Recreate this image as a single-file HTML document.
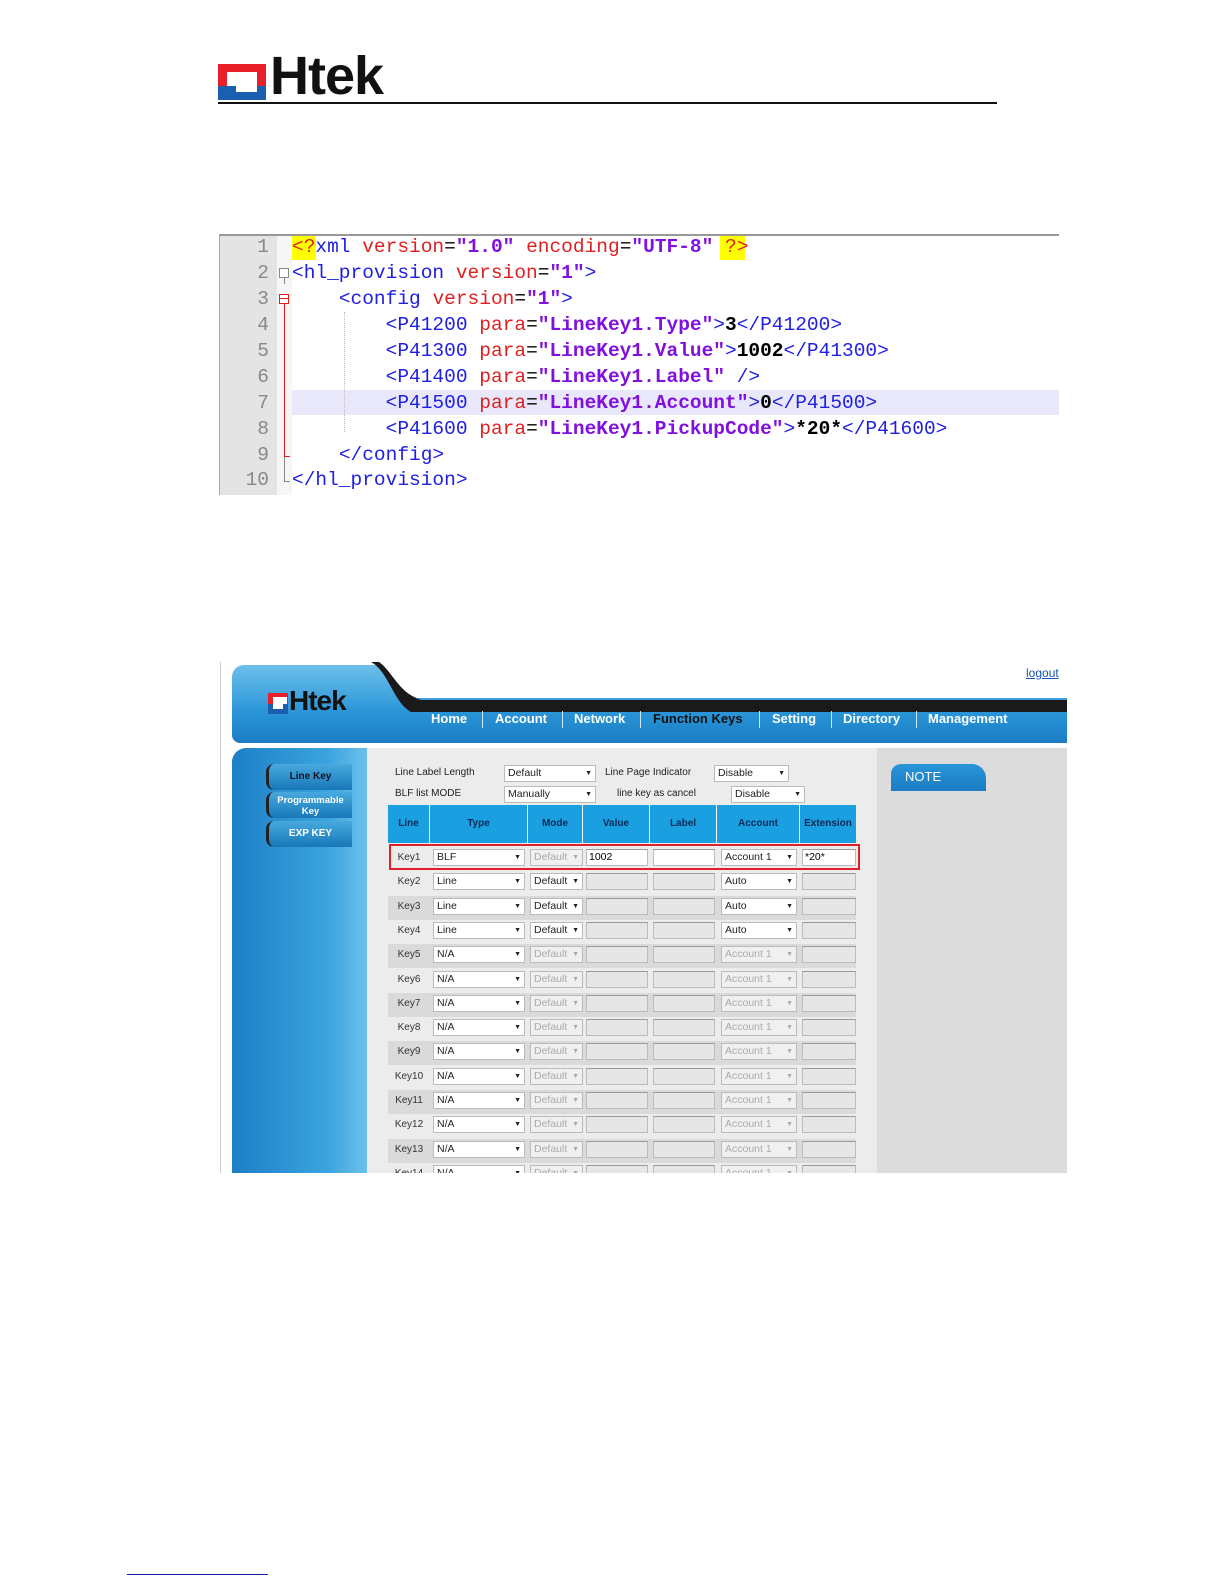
<!DOCTYPE html>
<html><head><meta charset="utf-8"><style>
*{margin:0;padding:0;box-sizing:border-box}
html{width:1224px;height:1584px;overflow:hidden}
body{width:1224px;height:1584px;background:#fff;position:relative;overflow:hidden;font-family:"Liberation Sans",sans-serif}
.a{position:absolute}
.code{font-family:"Liberation Mono",monospace;font-size:19.5px;white-space:pre;line-height:26px}
.t{color:#2020e0}.r{color:#e02020}.v{color:#8010e0;font-weight:bold}.k{color:#000;font-weight:bold}
.ln{position:absolute;left:219px;width:50px;text-align:right;color:#888;font-family:"Liberation Mono",monospace;font-size:19.5px;line-height:26px}
.nav{position:absolute;top:711px;color:#fff;font-weight:bold;font-size:13px}
.sep{position:absolute;top:711px;width:1px;height:17px;background:#cfe6f5}
.th{position:absolute;top:805px;height:38px;line-height:38px;text-align:center;font-size:10px;font-weight:bold;color:#0a2a55;background:#1a9fe0;border-right:1px solid #fff}
.row{position:absolute;left:388px;width:468px;height:24px;font-size:10px}
.sel{position:absolute;height:17px;border:1px solid #bbb;background:#fff;font-size:10.5px;line-height:15px;padding-left:3px;color:#222;overflow:hidden}
.sel:after{content:"▼";position:absolute;right:3px;top:0;font-size:7px}
.dis{color:#aaa;background:#f0f0f0}
.inp{position:absolute;height:17px;border:1px solid #bbb;border-top-color:#999;background:#e6e6e6}
.sb{position:absolute;left:266px;width:86px;height:26px;background:linear-gradient(#48a9df,#1878b8);border-left:3px solid #222;border-radius:8px 0 0 8px;color:#fff;font-size:10px;font-weight:bold;text-align:center}
</style></head><body>

<!-- header logo -->
<div class="a" style="left:218px;top:64px;width:48px;height:36px;background:#e8202a"></div>
<div class="a" style="left:227px;top:72px;width:30px;height:14px;background:#fff"></div>
<div class="a" style="left:227px;top:86px;width:30px;height:14px;background:#1a5fb0"></div>
<div class="a" style="left:236px;top:86px;width:21px;height:6px;background:#fff"></div>
<div class="a" style="left:218px;top:86px;width:9px;height:14px;background:#1a5fb0"></div>
<div class="a" style="left:257px;top:86px;width:9px;height:14px;background:#1a5fb0"></div>
<div class="a" style="left:270px;top:48px;font-size:54px;font-weight:bold;color:#111;letter-spacing:-1px;line-height:56px">Htek</div>
<div class="a" style="left:218px;top:102px;width:779px;height:2px;background:#111"></div>

<!-- code box -->
<div class="a" style="left:219px;top:234px;width:840px;height:261px;background:#fff;border-top:2px solid #999;border-left:1px solid #aaa"></div>
<div class="a" style="left:220px;top:236px;width:57px;height:259px;background:#e4e4e4"></div>
<div class="a" style="left:277px;top:236px;width:15px;height:259px;background:#f6f6f6"></div>
<div class="a" style="left:292px;top:390px;width:767px;height:25px;background:#e8e8fa"></div>
<div class="a" style="left:292px;top:236px;width:24px;height:24px;background:#ffff00"></div>
<div class="a" style="left:720px;top:236px;width:25px;height:24px;background:#ffff00"></div>
<div class="a" style="left:284px;top:272px;width:1px;height:12px;background:#888"></div>
<div class="a" style="left:279px;top:268px;width:10px;height:10px;border:1px solid #888;background:#fff"></div>
<div class="a" style="left:279px;top:294px;width:10px;height:10px;border:1px solid #e02020;background:#fff"></div>
<div class="a" style="left:280px;top:298px;width:8px;height:1px;background:#e02020"></div>
<div class="a" style="left:284px;top:304px;width:1px;height:152px;background:#e02020"></div>
<div class="a" style="left:284px;top:456px;width:6px;height:1px;background:#e02020"></div>
<div class="a" style="left:284px;top:457px;width:1px;height:24px;background:#888"></div>
<div class="a" style="left:284px;top:481px;width:6px;height:1px;background:#888"></div>
<div class="a" style="left:344px;top:312px;width:0;height:120px;border-left:1px dotted #bbb"></div>

<div class="ln" style="top:234px">1</div><div class="ln" style="top:260px">2</div><div class="ln" style="top:286px">3</div><div class="ln" style="top:312px">4</div><div class="ln" style="top:338px">5</div><div class="ln" style="top:364px">6</div><div class="ln" style="top:390px">7</div><div class="ln" style="top:416px">8</div><div class="ln" style="top:442px">9</div><div class="ln" style="top:467px">10</div>

<div class="a code" style="left:292px;top:234px"><span class="r">&lt;?</span><span class="t">xml</span> <span class="r">version</span>=<span class="v">"1.0"</span> <span class="r">encoding</span>=<span class="v">"UTF-8"</span> <span class="r">?&gt;</span></div>
<div class="a code" style="left:292px;top:260px"><span class="t">&lt;hl_provision</span> <span class="r">version</span>=<span class="v">"1"</span><span class="t">&gt;</span></div>
<div class="a code" style="left:292px;top:286px">    <span class="t">&lt;config</span> <span class="r">version</span>=<span class="v">"1"</span><span class="t">&gt;</span></div>
<div class="a code" style="left:292px;top:312px">        <span class="t">&lt;P41200</span> <span class="r">para</span>=<span class="v">"LineKey1.Type"</span><span class="t">&gt;</span><span class="k">3</span><span class="t">&lt;/P41200&gt;</span></div>
<div class="a code" style="left:292px;top:338px">        <span class="t">&lt;P41300</span> <span class="r">para</span>=<span class="v">"LineKey1.Value"</span><span class="t">&gt;</span><span class="k">1002</span><span class="t">&lt;/P41300&gt;</span></div>
<div class="a code" style="left:292px;top:364px">        <span class="t">&lt;P41400</span> <span class="r">para</span>=<span class="v">"LineKey1.Label"</span> <span class="t">/&gt;</span></div>
<div class="a code" style="left:292px;top:390px">        <span class="t">&lt;P41500</span> <span class="r">para</span>=<span class="v">"LineKey1.Account"</span><span class="t">&gt;</span><span class="k">0</span><span class="t">&lt;/P41500&gt;</span></div>
<div class="a code" style="left:292px;top:416px">        <span class="t">&lt;P41600</span> <span class="r">para</span>=<span class="v">"LineKey1.PickupCode"</span><span class="t">&gt;</span><span class="k">*20*</span><span class="t">&lt;/P41600&gt;</span></div>
<div class="a code" style="left:292px;top:442px">    <span class="t">&lt;/config&gt;</span></div>
<div class="a code" style="left:292px;top:467px"><span class="t">&lt;/hl_provision&gt;</span></div>

<!-- web UI -->
<div class="a" style="left:220px;top:662px;width:847px;height:511px;overflow:hidden;border-left:1px solid #ccc">
 <div class="a" style="left:11px;top:3px;width:836px;height:78px;border-radius:12px 0 0 8px;background:linear-gradient(#6cc0ea,#2a95d8 60%,#1a7cc4)"></div>
 <svg class="a" style="left:150px;top:0" width="697" height="50"><path d="M0 0 H10 C22 8 30 32 50 38 H697 V50 H40 C22 40 18 10 0 0Z" fill="#1a1a1a"/><path d="M0 0 H8 C20 8 28 30 46 36 H697 V0 Z" fill="#fff"/></svg>
 <div class="a" style="left:805px;top:4px;font-size:12px;color:#1a55b0;text-decoration:underline">logout</div>
 <div class="a" style="left:47px;top:31px;width:20px;height:21px;background:#e8202a"></div>
 <div class="a" style="left:52px;top:35px;width:14px;height:7px;background:#fff"></div>
 <div class="a" style="left:47px;top:42px;width:20px;height:10px;background:#1a5fb0"></div>
 <div class="a" style="left:52px;top:42px;width:10px;height:5px;background:#fff"></div>
 <div class="a" style="left:68px;top:23px;font-size:28px;font-weight:bold;color:#111;letter-spacing:-1px">Htek</div>
 <div class="a" style="left:11px;top:86px;width:135px;height:430px;border-radius:14px 0 0 0;background:linear-gradient(90deg,#1d7fc6,#3aa3de 70%,#6cc0ea)"></div>
 <div class="a" style="left:146px;top:86px;width:510px;height:430px;background:#ececec"></div>
 <div class="a" style="left:656px;top:86px;width:191px;height:430px;background:#dcdcdc"></div>
</div>
<div class="nav" style="left:431px">Home</div><div class="sep" style="left:482px"></div>
<div class="nav" style="left:495px">Account</div><div class="sep" style="left:562px"></div>
<div class="nav" style="left:574px">Network</div><div class="sep" style="left:640px"></div>
<div class="nav" style="left:653px;color:#111">Function Keys</div><div class="sep" style="left:759px"></div>
<div class="nav" style="left:772px">Setting</div><div class="sep" style="left:831px"></div>
<div class="nav" style="left:843px">Directory</div><div class="sep" style="left:916px"></div>
<div class="nav" style="left:928px">Management</div>

<div class="sb" style="top:764px;line-height:26px;color:#112">Line Key</div>
<div class="sb" style="top:792px;line-height:11px;padding-top:3px;font-size:9.5px">Programmable<br>Key</div>
<div class="sb" style="top:821px;line-height:26px">EXP KEY</div>

<div class="a" style="left:891px;top:764px;width:95px;height:27px;background:linear-gradient(#2a95d8,#1a7cc4);border-radius:10px 14px 0 0;color:#fff;font-size:13px;line-height:26px;padding-left:14px">NOTE</div>

<div class="a" style="left:395px;top:767px;font-size:10px;color:#222">Line Label Length</div>
<div class="sel" style="left:504px;top:765px;width:92px">Default</div>
<div class="a" style="left:605px;top:767px;font-size:10px;color:#222">Line Page Indicator</div>
<div class="sel" style="left:714px;top:765px;width:75px">Disable</div>
<div class="a" style="left:395px;top:788px;font-size:10px;color:#222">BLF list MODE</div>
<div class="sel" style="left:504px;top:786px;width:92px">Manually</div>
<div class="a" style="left:617px;top:788px;font-size:10px;color:#222">line key as cancel</div>
<div class="sel" style="left:731px;top:786px;width:74px">Disable</div>

<div class="th" style="left:388px;width:42px">Line</div>
<div class="th" style="left:430px;width:98px">Type</div>
<div class="th" style="left:528px;width:55px">Mode</div>
<div class="th" style="left:583px;width:67px">Value</div>
<div class="th" style="left:650px;width:67px">Label</div>
<div class="th" style="left:717px;width:83px">Account</div>
<div class="th" style="left:800px;width:56px;border-right:0">Extension</div>

<div id="rows"></div>
<div class="a" style="left:389px;top:844px;width:471px;height:26px;border:2px solid #e0202a"></div>

<div class="a" style="left:127px;top:1574px;width:141px;height:1px;background:#1a1aa0"></div>

<script>
var h='';var T=['BLF','Line','Line','Line'];var A=['Account 1','Auto','Auto','Auto'];
for(var i=0;i<14;i++){var y=847+i*24.3;var bg=(i%2==0&&i>0)?'#dadada':'transparent';
var t=T[i]||'N/A',a=A[i]||'Account 1',en=i>0&&i<4,d=i>=4;
h+='<div class="row" style="top:'+y+'px;background:'+bg+'">'+
'<div class="a" style="left:0;width:42px;text-align:center;top:5px;color:#333">Key'+(i+1)+'</div>'+
'<div class="sel" style="left:45px;top:2px;width:92px">'+t+'</div>'+
'<div class="sel'+(en?'':' dis')+'" style="left:142px;top:2px;width:53px">Default</div>'+
(i==0?'<div class="inp" style="left:198px;top:2px;width:62px;background:#fff;font-size:10.5px;line-height:15px;padding-left:2px">1002</div><div class="inp" style="left:265px;top:2px;width:62px;background:#fff"></div>':'<div class="inp" style="left:198px;top:2px;width:62px"></div><div class="inp" style="left:265px;top:2px;width:62px"></div>')+
'<div class="sel'+(d?' dis':'')+'" style="left:333px;top:2px;width:76px">'+a+'</div>'+
(i==0?'<div class="inp" style="left:414px;top:2px;width:54px;background:#fff;font-size:10.5px;line-height:15px;padding-left:2px">*20*</div>':'<div class="inp" style="left:414px;top:2px;width:54px"></div>')+
'</div>';}
document.getElementById('rows').innerHTML=h;
</script>
<div class="a" style="left:220px;top:1173px;width:860px;height:30px;background:#fff"></div>
</body></html>
